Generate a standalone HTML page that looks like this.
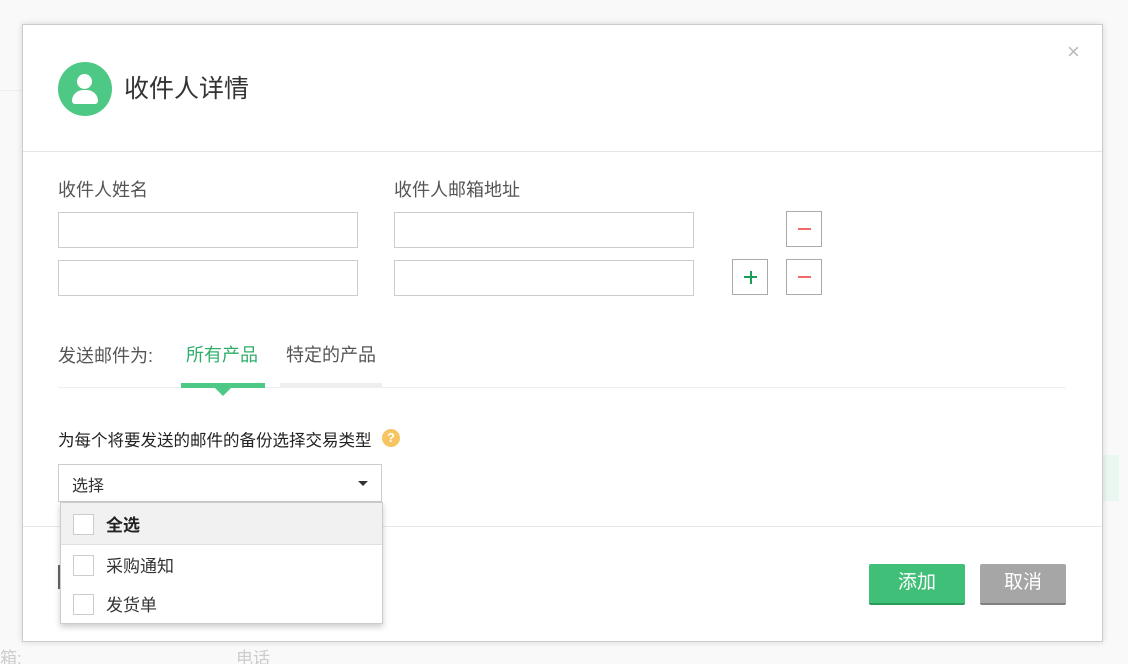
<!DOCTYPE html>
<html><head><meta charset="utf-8"><style>
*{box-sizing:border-box;margin:0;padding:0}
html,body{width:1128px;height:664px;overflow:hidden}
body{background:#f9f9f9;font-family:"Liberation Sans","Noto Sans CJK SC",sans-serif;position:relative;color:#333}
.a{position:absolute}
.modal{left:22px;top:24px;width:1081px;height:618px;background:#fff;border:1px solid #ccc;box-shadow:0 0 6px rgba(0,0,0,.15)}
.inp{position:absolute;width:300px;height:36px;border:1px solid #ccc;background:#fff}
.btn{position:absolute;width:36px;height:36px;border:1px solid #aaa;background:#fff}
.lbl{font-size:18px;color:#555}
.cb{position:absolute;left:12px;width:21px;height:21px;border:1px solid #ccc;background:#fff}
</style></head><body>
<div class="a" style="left:0;top:90px;width:22px;height:1px;background:#eee"></div>
<div class="a" style="left:1103px;top:455px;width:16px;height:46px;background:#eaf7f0"></div>
<div class="a" style="left:0;top:644px;font-size:17px;color:#ccc">箱:</div>
<div class="a" style="left:236px;top:644px;font-size:17px;color:#ccc">电话</div>
<div class="a modal">
  <div class="a" style="left:1044px;top:14px;font-size:22px;color:#bbb">×</div>
  <div class="a" style="left:35px;top:37px;width:54px;height:54px;border-radius:50%;background:#4ec985;overflow:hidden">
    <div class="a" style="left:19px;top:12px;width:15px;height:15px;border-radius:50%;background:#fff"></div>
    <div class="a" style="left:14px;top:28px;width:26px;height:14px;border-radius:11px 11px 3px 3px;background:#fff"></div>
  </div>
  <div class="a" style="left:101px;top:44px;font-size:25px;color:#333">收件人详情</div>
  <div class="a" style="left:0;top:126px;width:1079px;height:1px;background:#e5e5e5"></div>
  <div class="a lbl" style="left:35px;top:151px">收件人姓名</div>
  <div class="a lbl" style="left:371px;top:151px">收件人邮箱地址</div>
  <div class="inp" style="left:35px;top:187px"></div>
  <div class="inp" style="left:371px;top:187px"></div>
  <div class="inp" style="left:35px;top:235px"></div>
  <div class="inp" style="left:371px;top:235px"></div>
  <div class="btn" style="left:763px;top:186px"><div class="a" style="left:11px;top:16px;width:13px;height:2px;background:#f36a6a"></div></div>
  <div class="btn" style="left:709px;top:234px"><div class="a" style="left:11px;top:16px;width:13px;height:2px;background:#1a9e5a"></div><div class="a" style="left:16.5px;top:10.5px;width:2px;height:13px;background:#1a9e5a"></div></div>
  <div class="btn" style="left:763px;top:234px"><div class="a" style="left:11px;top:16px;width:13px;height:2px;background:#f36a6a"></div></div>
  <div class="a lbl" style="left:35px;top:317px">发送邮件为:</div>
  <div class="a" style="left:163px;top:316px;font-size:18px;color:#2fae6a">所有产品</div>
  <div class="a lbl" style="left:263px;top:316px">特定的产品</div>
  <div class="a" style="left:35px;top:362px;width:1008px;height:1px;background:#eee"></div>
  <div class="a" style="left:257px;top:358px;width:102px;height:4px;background:#eee"></div>
  <div class="a" style="left:158px;top:358px;width:84px;height:5px;background:#4ec985"></div>
  <div class="a" style="left:192px;top:363px;width:0;height:0;border-left:8px solid transparent;border-right:8px solid transparent;border-top:8px solid #4ec985"></div>
  <div class="a" style="left:35px;top:402px;font-size:16.5px;color:#222">为每个将要发送的邮件的备份选择交易类型</div>
  <div class="a" style="left:359px;top:404px;width:18px;height:18px;border-radius:50%;background:#f7c462;color:#fff;font-size:13px;font-weight:bold;text-align:center;line-height:18px">?</div>
  <div class="a" style="left:35px;top:439px;width:324px;height:38px;border:1px solid #ccc;background:#fff">
    <div class="a" style="left:13px;top:7px;font-size:16px;color:#333">选择</div>
    <div class="a" style="left:299px;top:16px;border-left:5px solid transparent;border-right:5px solid transparent;border-top:5px solid #333"></div>
  </div>
  <div class="a" style="left:0;top:501px;width:1079px;height:1px;background:#e8e8e8"></div>
  <div class="a" style="left:35px;top:540px;width:3px;height:24px;background:#666"></div>
  <div class="a" style="left:846px;top:539px;width:96px;height:41px;background:#40bf78;border-bottom:2px solid #2a9a59;border-radius:2px;color:#fff;font-size:19px;text-align:center;line-height:38px">添加</div>
  <div class="a" style="left:957px;top:539px;width:86px;height:41px;background:#a6a6a6;border-bottom:2px solid #808080;border-radius:2px;color:#fff;font-size:19px;text-align:center;line-height:38px">取消</div>
  <div class="a" style="left:37px;top:477px;width:323px;height:122px;background:#fff;border:1px solid #ccc;box-shadow:0 3px 6px rgba(0,0,0,.2)">
    <div class="a" style="left:0;top:0;width:321px;height:42px;background:#f1f1f1;border-bottom:1px solid #e0e0e0"></div>
    <div class="cb" style="top:11px"></div>
    <div class="a" style="left:45px;top:8px;font-size:17px;font-weight:bold;color:#222">全选</div>
    <div class="cb" style="top:52px"></div>
    <div class="a" style="left:45px;top:49px;font-size:17px;color:#333">采购通知</div>
    <div class="cb" style="top:91px"></div>
    <div class="a" style="left:45px;top:88px;font-size:17px;color:#333">发货单</div>
  </div>
</div>
</body></html>
